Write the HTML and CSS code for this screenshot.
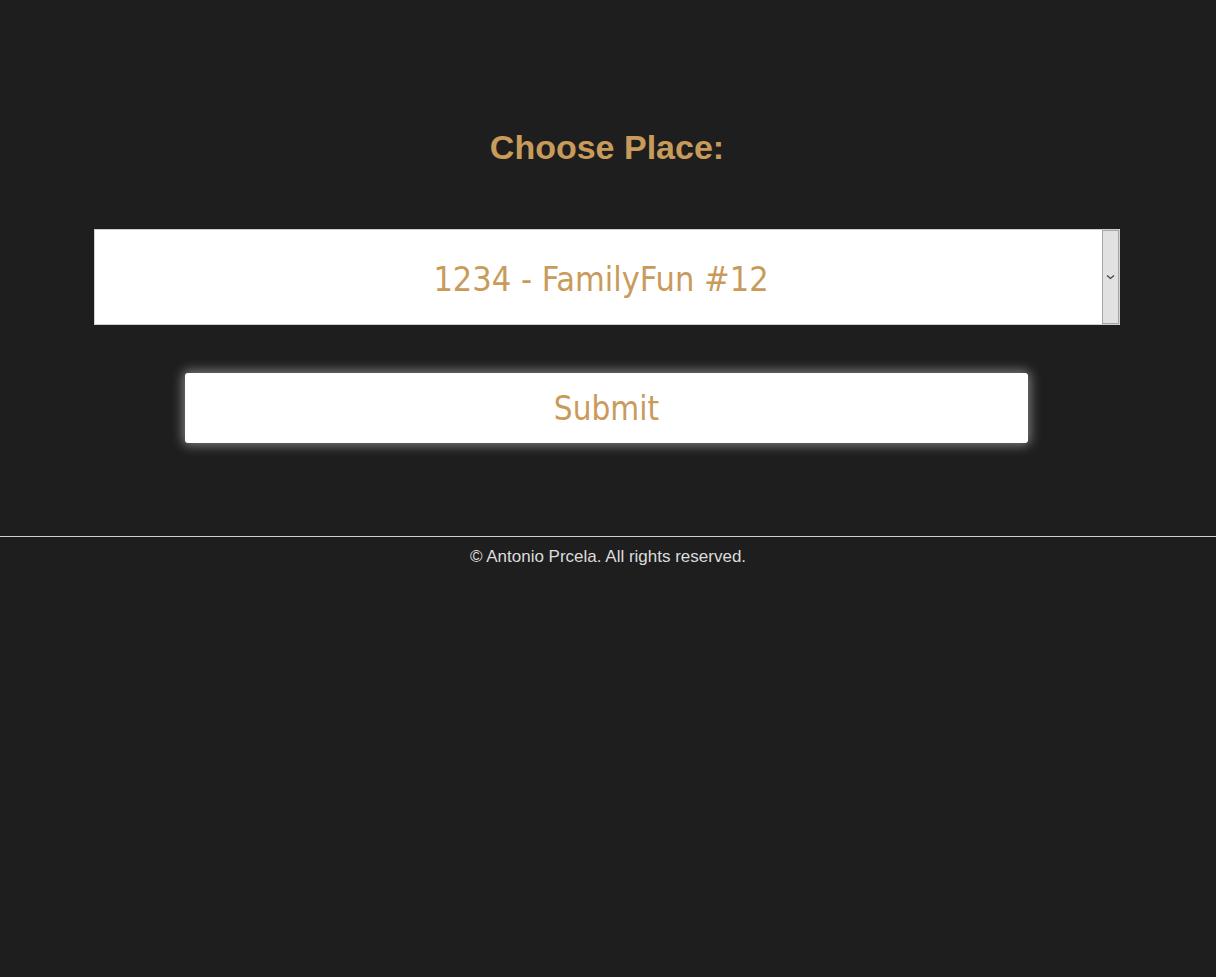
FILE: index.html
```html
<!DOCTYPE html>
<html lang="en">
<head>
<meta charset="utf-8">
<title>Choose Place</title>
<link rel="stylesheet" href="styles.css">
</head>
<body>
<main class="main">
  <form class="form">
    <h1 class="title">Choose Place:</h1>
    <div class="select-wrap">
      <select class="place-select">
        <option>1234 - FamilyFun #12</option>
      </select>
      <span class="select-arrow">
        <svg width="9" height="6" viewBox="0 0 9 6"><path d="M1 1.5 L4.5 4.5 L8 1.5" fill="none" stroke="#444" stroke-width="1.3"/></svg>
      </span>
    </div>
    <button type="button" class="submit">Submit</button>
  </form>
</main>
<footer class="footer">
  <p class="footer-text">© Antonio Prcela. All rights reserved.</p>
</footer>
</body>
</html>
```

FILE: styles.css
```css
html, body {
  margin: 0;
  padding: 0;
  background: #1e1e1e;
}
body {
  font-family: "Liberation Sans", Arial, sans-serif;
  min-height: 977px;
}
.main {
  padding-top: 129px;
  height: 407px;
  box-sizing: content-box;
}
.form {
  display: flex;
  flex-direction: column;
  align-items: center;
}
.title {
  margin: 0;
  font-size: 34px;
  font-weight: bold;
  color: #c99b5b;
  line-height: 37px;
  margin-left: -2px;
}
.select-wrap {
  position: relative;
  margin-top: 63px;
  width: 1026px;
  height: 96px;
  margin-left: -2px;
}
.place-select {
  appearance: none;
  -webkit-appearance: none;
  width: 100%;
  height: 100%;
  box-sizing: border-box;
  border: 1px solid #d0d0d0;
  background: #fff;
  color: #c99b5b;
  font-family: "DejaVu Sans Condensed", "DejaVu Sans", sans-serif;
  font-size: 34px;
  text-align: center;
  text-align-last: center;
  outline: none;
  padding: 4px 12px 0 0;
}
.select-arrow {
  position: absolute;
  top: 1px;
  right: 1px;
  width: 17px;
  height: 94px;
  box-sizing: border-box;
  background: #e1e1e1;
  border: 1px solid #a6a6a6;
  display: flex;
  align-items: center;
  justify-content: center;
  pointer-events: none;
}
.submit {
  margin-top: 48px;
  width: 843px;
  height: 70px;
  margin-left: -3px;
  border: none;
  border-radius: 3px;
  background: #fff;
  color: #c99b5b;
  font-family: "DejaVu Sans Condensed", "DejaVu Sans", sans-serif;
  font-size: 33px;
  padding-top: 2px;
  box-shadow: 0 0 12px 2px rgba(255, 255, 255, 0.45);
  cursor: pointer;
}
.footer {
  border-top: 1px solid #cfcfcf;
  text-align: center;
}
.footer-text {
  margin: 0;
  padding-top: 10px;
  font-size: 17px;
  color: #dcdcdc;
  line-height: 19px;
}
```
